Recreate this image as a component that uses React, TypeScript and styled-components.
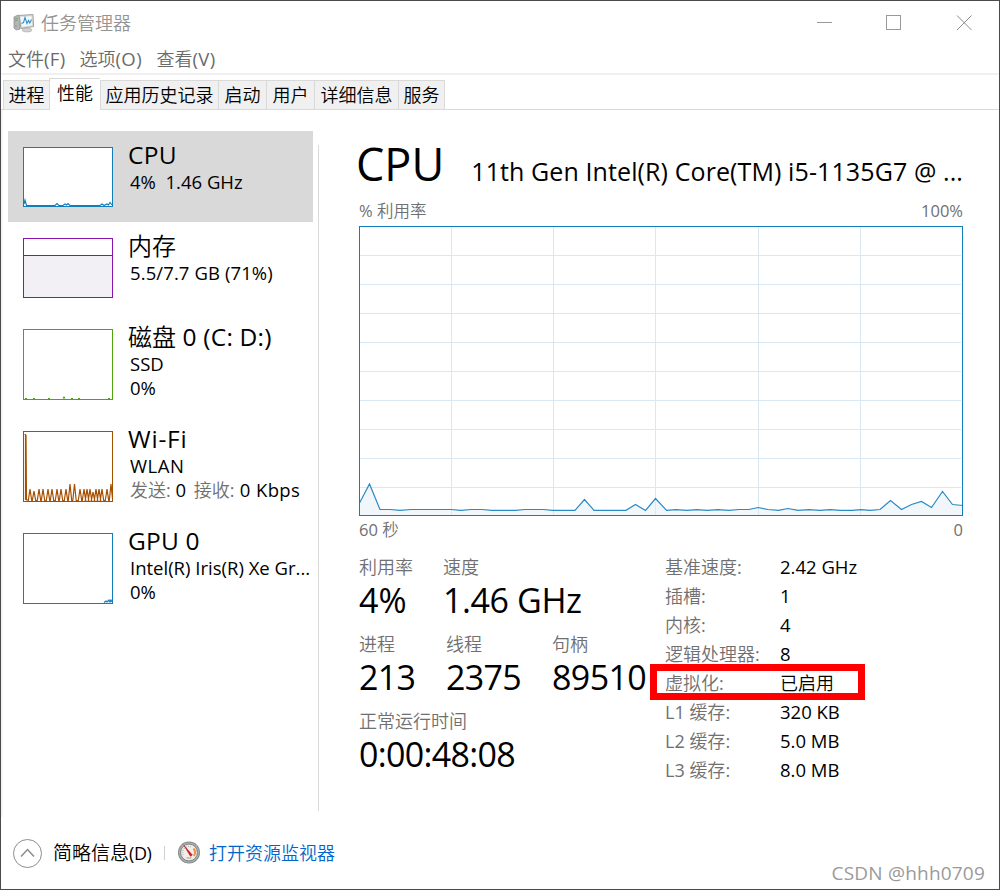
import styled, { createGlobalStyle } from "styled-components";

const GlobalStyle = createGlobalStyle`
  * {
    box-sizing: border-box;
  }

  body {
    margin: 0;
    background: #ffffff;
    font-family: "Open Sans", "Noto Sans CJK SC", sans-serif;
    font-size: 18px;
    color: #000000;
  }
`;

const Window = styled.div`
  position: relative;
  width: 1000px;
  height: 890px;
  border: 1px solid #4a4a4c;
  background: #ffffff;
  display: flex;
  flex-direction: column;
  overflow: hidden;
`;

const Text = styled.span<{ $size?: number; $track?: number; $light?: boolean }>`
  font-size: ${({ $size }) => $size ?? 18}px;
  letter-spacing: ${({ $track }) => $track ?? 0}px;
  font-weight: ${({ $light }) => ($light ? 350 : 400)};
  white-space: pre;
`;

const Value = styled(Text).attrs({ $size: 18.5 })``;

const LabelText = styled.span`
  color: #707070;
  white-space: pre;
`;

const TitleBar = styled.header`
  height: 44px;
  display: flex;
  align-items: center;
  padding-left: 12px;
  color: #949494;
`;

const AppTitle = styled.div`
  flex: 1;
  margin-left: 6px;
  line-height: 24px;
`;

const WindowButton = styled.div`
  width: 70px;
  height: 44px;
  display: flex;
  align-items: center;
  justify-content: center;
`;

const MenuBar = styled.nav`
  height: 30px;
  padding-left: 7px;
  border-bottom: 2px solid #f0f0f0;
  display: flex;
  color: #6a6a6a;
  line-height: 28px;
`;

const MenuItem = styled.div<{ $width: number }>`
  width: ${({ $width }) => $width}px;
`;

const TabStrip = styled.div`
  height: 35px;
  padding-left: 2px;
  display: flex;
  align-items: flex-end;
  border-bottom: 1px solid #d9d9d9;
`;

const Tab = styled.div<{ $width: number; $active?: boolean }>`
  width: ${({ $width }) => $width}px;
  height: ${({ $active }) => ($active ? 32 : 29)}px;
  margin-bottom: ${({ $active }) => ($active ? -1 : 0)}px;
  padding-bottom: ${({ $active }) => ($active ? 1 : 0)}px;
  border: 1px solid #d9d9d9;
  border-bottom: none;
  border-right: none;
  background: ${({ $active }) => ($active ? "#ffffff" : "#f0f0f0")};
  line-height: 29px;
  text-align: center;
  white-space: nowrap;

  &:last-child {
    border-right: 1px solid #d9d9d9;
  }
`;

const Content = styled.div`
  height: 707px;
  border-left: 2px solid #f5f5f5;
  display: flex;
`;

const Sidebar = styled.aside`
  width: 310px;
  padding: 21px 0 0 5px;
`;

const Device = styled.div<{ $height: number; $selected?: boolean }>`
  width: 305px;
  height: ${({ $height }) => $height}px;
  padding: 16px 0 0 15px;
  display: flex;
  align-items: flex-start;
  background: ${({ $selected }) => ($selected ? "#d9d9d9" : "transparent")};
`;

const DeviceInfo = styled.div`
  margin: -7px 0 0 15px;
`;

const DeviceName = styled.div`
  height: 30px;
  line-height: 30px;
`;

const DeviceLine = styled.div`
  height: 24px;
  padding-left: 2px;
  line-height: 24px;
`;

const Divider = styled.div`
  width: 1px;
  height: 666px;
  margin: 35px 0 0 5px;
  background: #d9d9d9;
`;

const Main = styled.main`
  width: 604px;
  margin-left: 40px;
  padding-top: 29px;
`;

const Heading = styled.div`
  height: 61px;
  display: flex;
  justify-content: space-between;
  align-items: baseline;
  line-height: 49px;
  margin-left: -3px;
`;

const ChartCaption = styled.div`
  height: 26px;
  display: flex;
  justify-content: space-between;
  line-height: 21px;
  font-size: 16.5px;
`;

const AxisCaption = styled(ChartCaption)`
  height: 36px;
  line-height: 28px;
`;

const ChartSvg = styled.svg`
  display: block;
`;

const Stats = styled.div`
  display: flex;
`;

const StatsLeft = styled.div`
  width: 306px;
`;

const StatRow = styled.div`
  height: 77px;
  display: flex;
`;

const Stat = styled.div<{ $width: number }>`
  width: ${({ $width }) => $width}px;
  flex: none;
`;

const StatLabel = styled.div`
  height: 30px;
  line-height: 30px;
`;

const StatValue = styled.div`
  height: 36px;
  line-height: 36px;
`;

const Specs = styled.div`
  flex: 1;
`;

const Spec = styled.div`
  position: relative;
  height: 29px;
  line-height: 30px;
  display: grid;
  grid-template-columns: 115px 1fr;
`;

const Highlight = styled.div`
  position: absolute;
  left: -15px;
  top: -4px;
  width: 215px;
  height: 36px;
  border: 7px solid #ff0000;
`;

const Footer = styled.footer`
  flex: 1;
  padding-left: 12px;
  display: flex;
  align-items: center;
`;

const FooterLabel = styled.div`
  width: 111px;
  margin-left: 11px;
  padding-bottom: 2px;
`;

const Separator = styled.div`
  width: 1px;
  height: 14px;
  margin-right: 12px;
  background: #d0d0d0;
`;

const FooterLink = styled.a`
  margin-left: 8px;
  padding-bottom: 2px;
  color: #0066cc;
`;

const Watermark = styled.div`
  position: absolute;
  right: 14px;
  bottom: 4px;
  line-height: 24px;
  color: #9a9a9a;
`;

const HanRun = styled.span`
  font-weight: 350;
`;

// Chinese runs are set a little lighter than the latin ones beside them
function Label({ children }: { children: string }) {
  return (
    <LabelText>
      {children.split(/([\u4e00-\u9fff]+)/).map((part, i) => (i % 2 ? <HanRun key={i}>{part}</HanRun> : part))}
    </LabelText>
  );
}

const menus = [
  { label: "文件", hotkey: "(F)", width: 71.5 },
  { label: "选项", hotkey: "(O)", width: 77 },
  { label: "查看", hotkey: "(V)", width: 72 },
];

const tabs = [
  { label: "进程", width: 46 },
  { label: "性能", width: 51, active: true },
  { label: "应用历史记录", width: 118 },
  { label: "启动", width: 48 },
  { label: "用户", width: 48 },
  { label: "详细信息", width: 84 },
  { label: "服务", width: 47 },
];

const specs = [
  { label: "基准速度:", value: "2.42 GHz" },
  { label: "插槽:", value: "1" },
  { label: "内核:", value: "4" },
  { label: "逻辑处理器:", value: "8" },
  { label: "虚拟化:", value: "已启用", highlighted: true },
  { label: "L1 缓存:", value: "320 KB" },
  { label: "L2 缓存:", value: "5.0 MB" },
  { label: "L3 缓存:", value: "8.0 MB" },
];

const cpuPoints =
  "0,278 10.5,258 21,283.5 31,283.5 41,284.3 52,283.5 92,283.5 102,284.3 112,283.5 123,283.5 133,284.3 156,284.3 166,283.5 184,283.5 194,284.3 216,284.3 225.5,273.5 235,284.3 267,284.3 276.5,278.5 286.5,284.5 296.5,272.5 307.5,284.3 317,283.6 328,284.3 338,283.6 348,284.3 359,283.6 370,284.3 380,283.5 390,283.5 399,281.5 409,283.5 419.5,284.3 429,282.5 439,284.3 450,283.6 461,284.3 471,283.6 481,284.3 493,284.3 502,283.6 511,284.3 521,283.5 531.5,274.5 542.5,283.5 552.5,278.5 562.5,275.5 572.5,281.5 583.5,265.5 593.5,278.5 604,279.5";

function CpuChart() {
  return (
    <ChartSvg width="604" height="290">
      <polygon points={`0,290 ${cpuPoints} 604,290`} fill="#f1f6fa" />
      <g stroke="#d9e8f2" shapeRendering="crispEdges">
        {[92.5, 194.5, 296.5, 399.5, 501.5].map((x) => (
          <line key={x} x1={x} x2={x} y1="1" y2="289" />
        ))}
        {[0, 1, 2, 3, 4, 5, 6, 7, 8].map((i) => (
          <line key={i} x1="1" x2="602" y1={29.5 + i * 29} y2={29.5 + i * 29} />
        ))}
      </g>
      <polyline points={cpuPoints} fill="none" stroke="#2a8ac4" strokeWidth="1.2" />
      <rect x="0.5" y="0.5" width="603" height="289" fill="none" stroke="#117dbb" />
    </ChartSvg>
  );
}

type ThumbProps = {
  height: number;
  color: string;
  line?: string;
  area?: string;
};

function Thumb({ height, color, line, area }: ThumbProps) {
  return (
    <ChartSvg width="90" height={height}>
      <rect x="0.5" y="0.5" width="89" height={height - 1} fill="#ffffff" stroke={color} />
      {area ? <path d={area} fill="#f3f0f5" /> : null}
      {line ? <path d={line} fill="none" stroke={color} strokeWidth="1.2" /> : null}
    </ChartSvg>
  );
}

// [x, height] of each network burst
const bursts = [
  [7, 11], [11, 9], [16, 11], [20, 11], [25, 11], [29, 11], [34, 11], [38, 11], [43, 11],
  [47, 16], [51.5, 16], [57, 11], [61, 11], [64, 11], [67, 11], [70, 8], [73, 11], [76, 11],
  [79, 11], [84, 11], [88, 16],
];

const wifiLine =
  "M1.5 3.5H2.5V69M3 4L3.5 69L5 69 " +
  bursts.map(([x, h]) => `L${x - 1.7} 69.5L${x} ${69 - h}L${x + 1.7} 69.5`).join(" ");

function TaskManagerIcon() {
  return (
    <svg width="22" height="20" viewBox="0 0 22 20">
      <path d="M1 4l4-2 2 1v13l-4 1-2-2z" fill="#b5b5b5" stroke="#888888" strokeWidth="0.7" />
      <path d="M2 6l3-1M2 8l3-1M2 13h2" stroke="#6f9f6f" strokeWidth="0.8" />
      <ellipse cx="14" cy="17" rx="5" ry="2" fill="#d2d2d2" stroke="#aaaaaa" strokeWidth="0.6" />
      <path d="M6 2.5L20 1.5l.6 12L8 15.5z" fill="#d9d9d9" stroke="#a4a4a4" />
      <path d="M7.5 4l11-.8.5 9L9 13.7z" fill="#f2f9fd" />
      <path d="M8.5 10.5l2-1 1.5-5 2 6 1.5-3 1.3 2.5 1.7-3.5" fill="none" stroke="#2d94cc" strokeWidth="1.1" />
    </svg>
  );
}

function GaugeIcon() {
  return (
    <svg width="24" height="24" viewBox="0 0 24 24">
      <circle cx="12" cy="11.5" r="11" fill="#7f8585" />
      <circle cx="12" cy="11.5" r="10.2" fill="#a9afae" />
      <circle cx="12" cy="11.5" r="8.4" fill="#f1eee9" stroke="#6b7070" strokeWidth="0.8" />
      <path d="M6.3 14A6 6 0 0 1 14 5.9" fill="none" stroke="#b9b9b9" strokeWidth="1.3" strokeDasharray="1 1.2" />
      <path d="M16.5 7.5a6 6 0 0 1 .3 7.5" fill="none" stroke="#e9904d" strokeWidth="2" />
      <path d="M9 16h6l-1 2h-4z" fill="#c5c5c5" />
      <path d="M7 4.5l8.3 9.5-1.8 1.3z" fill="#d7191c" stroke="#b71518" strokeWidth="0.6" />
    </svg>
  );
}

function App() {
  return (
    <>
      <GlobalStyle />
      <Window>
        <TitleBar>
          <TaskManagerIcon />
          <AppTitle>
            <Text $light>任务管理器</Text>
          </AppTitle>
          <WindowButton>
            <svg width="16" height="16">
              <path d="M1 7.5h15" stroke="#999999" />
            </svg>
          </WindowButton>
          <WindowButton>
            <svg width="16" height="16">
              <rect x="0.5" y="0.5" width="14" height="14" fill="none" stroke="#999999" />
            </svg>
          </WindowButton>
          <WindowButton>
            <svg width="16" height="16">
              <path d="M1 0.5l14.5 14.5M15.5 0.5l-14.5 14.5" stroke="#8c8c8c" />
            </svg>
          </WindowButton>
        </TitleBar>

        <MenuBar>
          {menus.map((menu) => (
            <MenuItem key={menu.label} $width={menu.width}>
              <Text $light>{menu.label}</Text>
              <Text $size={18.5} $track={0.4}>{menu.hotkey}</Text>
            </MenuItem>
          ))}
        </MenuBar>

        <TabStrip>
          {tabs.map((tab) => (
            <Tab key={tab.label} $width={tab.width} $active={tab.active}>
              <Text $light>{tab.label}</Text>
            </Tab>
          ))}
        </TabStrip>

        <Content>
          <Sidebar>
            <Device $height={91} $selected>
              <Thumb
                height={60}
                color="#117dbb"
                line="M1 57L2 53L3.5 58.5H32L34 56.5L36 58.5H40L42 57L43.5 58L45 56.5L47 58.5H77L79 57L81 58.5L84 57L85.5 58L87 55.5L89 58"
              />
              <DeviceInfo>
                <DeviceName>
                  <Text $size={24.5} $track={0.3}>CPU</Text>
                </DeviceName>
                <DeviceLine>
                  <Value>{"4%  1.46 GHz"}</Value>
                </DeviceLine>
              </DeviceInfo>
            </Device>
            <Device $height={91}>
              <Thumb height={60} color="#8b12ae" area="M1 17H89V59H1z" line="M1 17.5H89" />
              <DeviceInfo>
                <DeviceName>
                  <Text $light $size={24}>内存</Text>
                </DeviceName>
                <DeviceLine>
                  <Value $track={0.1}>5.5/7.7 GB (71%)</Value>
                </DeviceLine>
              </DeviceInfo>
            </Device>
            <Device $height={102}>
              <Thumb
                height={71}
                color="#4da60c"
                line="M2 69.5h2M10 69.5h2M25 69.5h2M40 69.5l1-1.5 1 1.5M48 69.5h2M55 69.5h2M85 69.5h2"
              />
              <DeviceInfo>
                <DeviceName>
                  <Text $light $size={24}>磁盘</Text>
                  <Text $size={24.5} $track={0.2}> 0 (C: D:)</Text>
                </DeviceName>
                <DeviceLine>
                  <Value>SSD</Value>
                </DeviceLine>
                <DeviceLine>
                  <Value>0%</Value>
                </DeviceLine>
              </DeviceInfo>
            </Device>
            <Device $height={102}>
              <Thumb height={71} color="#a74f01" line={wifiLine} />
              <DeviceInfo>
                <DeviceName>
                  <Text $size={24.5} $track={0.8}>Wi-Fi</Text>
                </DeviceName>
                <DeviceLine>
                  <Value $track={0.5}>WLAN</Value>
                </DeviceLine>
                <DeviceLine>
                  <Label>发送: </Label>
                  <Value $track={1.5}>0 </Value>
                  <Label>接收:</Label>
                  <Value $track={0.4}> 0 Kbps</Value>
                </DeviceLine>
              </DeviceInfo>
            </Device>
            <Device $height={102}>
              <Thumb height={71} color="#117dbb" line="M81 69.5l2-1.5 1 1 2-2 1 2 1-2 1 2" />
              <DeviceInfo>
                <DeviceName>
                  <Text $size={24.5} $track={0.2}>GPU 0</Text>
                </DeviceName>
                <DeviceLine>
                  <Value>Intel(R) Iris(R) Xe Gr...</Value>
                </DeviceLine>
                <DeviceLine>
                  <Value>0%</Value>
                </DeviceLine>
              </DeviceInfo>
            </Device>
          </Sidebar>
          <Divider />

          <Main>
            <Heading>
              <Text $size={45}>CPU</Text>
              <Text $size={25} $track={0.1}>11th Gen Intel(R) Core(TM) i5-1135G7 @ ...</Text>
            </Heading>
            <ChartCaption>
              <Label>% 利用率</Label>
              <Label>100%</Label>
            </ChartCaption>
            <CpuChart />
            <AxisCaption>
              <Label>60 秒</Label>
              <Label>0</Label>
            </AxisCaption>

            <Stats>
              <StatsLeft>
                <StatRow>
                  <Stat $width={84}>
                    <StatLabel>
                      <Label>利用率</Label>
                    </StatLabel>
                    <StatValue>
                      <Text $size={34}>4%</Text>
                    </StatValue>
                  </Stat>
                  <Stat $width={140}>
                    <StatLabel>
                      <Label>速度</Label>
                    </StatLabel>
                    <StatValue>
                      <Text $size={34} $track={-0.4}>1.46 GHz</Text>
                    </StatValue>
                  </Stat>
                </StatRow>
                <StatRow>
                  <Stat $width={87}>
                    <StatLabel>
                      <Label>进程</Label>
                    </StatLabel>
                    <StatValue>
                      <Text $size={34} $track={-0.7}>213</Text>
                    </StatValue>
                  </Stat>
                  <Stat $width={106}>
                    <StatLabel>
                      <Label>线程</Label>
                    </StatLabel>
                    <StatValue>
                      <Text $size={34} $track={-0.7}>2375</Text>
                    </StatValue>
                  </Stat>
                  <Stat $width={100}>
                    <StatLabel>
                      <Label>句柄</Label>
                    </StatLabel>
                    <StatValue>
                      <Text $size={34} $track={-0.6}>89510</Text>
                    </StatValue>
                  </Stat>
                </StatRow>
                <StatRow>
                  <Stat $width={200}>
                    <StatLabel>
                      <Label>正常运行时间</Label>
                    </StatLabel>
                    <StatValue>
                      <Text $size={34} $track={-0.7}>0:00:48:08</Text>
                    </StatValue>
                  </Stat>
                </StatRow>
              </StatsLeft>
              <Specs>
                {specs.map((spec) => (
                  <Spec key={spec.label}>
                    <Label>{spec.label}</Label>
                    {spec.highlighted ? <Text $light>{spec.value}</Text> : <Value>{spec.value}</Value>}
                    {spec.highlighted ? <Highlight /> : null}
                  </Spec>
                ))}
              </Specs>
            </Stats>
          </Main>
        </Content>

        <Footer>
          <svg width="29" height="29">
            <circle cx="14.5" cy="14.5" r="14" fill="none" stroke="#8c8c8c" />
            <path d="M8 17.5l6.5-7 6.5 7" fill="none" stroke="#8c8c8c" strokeWidth="1.5" />
          </svg>
          <FooterLabel>
            <Text $light $size={19}>简略信息</Text>
            <Text $track={-0.4}>(D)</Text>
          </FooterLabel>
          <Separator />
          <GaugeIcon />
          <FooterLink>
            <Text $light>打开资源监视器</Text>
          </FooterLink>
        </Footer>
        <Watermark>
          <Text $size={19} $track={0.2}>CSDN @hhh0709</Text>
        </Watermark>
      </Window>
    </>
  );
}

export default App;
